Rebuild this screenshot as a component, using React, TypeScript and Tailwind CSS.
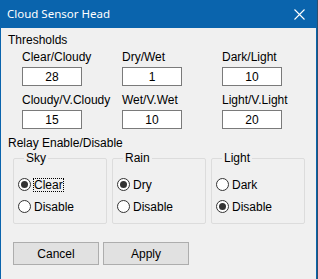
import React from 'react';

const FONT = "font-['Liberation_Sans',Arial,sans-serif]";

function Radio({ label, checked, focused }: { label: string; checked?: boolean; focused?: boolean }) {
  return (
    <div className="flex h-[13px] items-center">
      <span className="flex h-[13px] w-[13px] shrink-0 items-center justify-center rounded-full border border-[#333333] bg-white">
        {checked && <span className="h-[7px] w-[7px] rounded-full bg-[#333333]" />}
      </span>
      <span
        className={`ml-[2px] px-[1px] leading-[14px] ${
          focused ? 'outline outline-1 outline-dotted outline-[#000000] -outline-offset-1' : ''
        }`}
      >
        {label}
      </span>
    </div>
  );
}

function Group({ title, options, selected, focused }: { title: string; options: string[]; selected: number; focused?: boolean }) {
  return (
    <fieldset className="h-[73px] w-[94px] rounded-[2px] border border-[#dcdcdc] pl-[4px] pt-[13px]">
      <legend className="ml-[6px] px-[2px] leading-[14px]">{title}</legend>
      <div className="flex flex-col gap-[9px]">
        {options.map((o, i) => (
          <Radio key={o} label={o} checked={i === selected} focused={focused && i === selected} />
        ))}
      </div>
    </fieldset>
  );
}

function Field({ label, value }: { label: string; value: string }) {
  return (
    <div className="flex flex-col">
      <span className="leading-[14px]">{label}</span>
      <div className="mt-[3px] flex h-[19px] w-[60px] items-center justify-center border border-[#7a7a7a] bg-white leading-[14px]">
        {value}
      </div>
    </div>
  );
}

export default function App() {
  return (
    <div className={`flex h-[279px] w-[318px] bg-[#2a4f6e] text-[12px] text-black ${FONT}`}>
      <div className="flex w-[317px] flex-col border-x border-[#0a64ad] bg-[#f0f0f0]">
        {/* Title bar */}
        <div className="flex h-[28px] shrink-0 items-center justify-between bg-[#0a64ad] pl-[6px] pr-[10px] text-white">
          <span className="font-['Noto_Sans',sans-serif] text-[11.5px] leading-[16px]">Cloud Sensor Head</span>
          <svg width="11" height="11" viewBox="0 0 11 11" className="mr-[1px]">
            <path d="M0.5 0.5 L10.5 10.5 M10.5 0.5 L0.5 10.5" stroke="white" strokeWidth="1.1" />
          </svg>
        </div>

        {/* Body */}
        <div className="flex flex-col pl-[7px] pt-[5px]">
          <span className="leading-[14px]">Thresholds</span>
          <div className="ml-[14px] mt-[3px] grid w-[260px] grid-cols-[100px_100px_60px] gap-y-[7px]">
            <Field label="Clear/Cloudy" value="28" />
            <Field label="Dry/Wet" value="1" />
            <Field label="Dark/Light" value="10" />
            <Field label="Cloudy/V.Cloudy" value="15" />
            <Field label="Wet/V.Wet" value="10" />
            <Field label="Light/V.Light" value="20" />
          </div>

          <span className="mt-[7px] leading-[14px]">Relay Enable/Disable</span>
          <div className="ml-[5px] mt-[1px] flex gap-[5px]">
            <Group title="Sky" options={['Clear', 'Disable']} selected={0} focused />
            <Group title="Rain" options={['Dry', 'Disable']} selected={0} />
            <Group title="Light" options={['Dark', 'Disable']} selected={1} />
          </div>

          <div className="ml-[5px] mt-[18px] flex gap-[4px]">
            <button className="h-[23px] w-[86px] border border-[#adadad] bg-[#e1e1e1] leading-[14px]">Cancel</button>
            <button className="h-[23px] w-[86px] border border-[#adadad] bg-[#e1e1e1] leading-[14px]">Apply</button>
          </div>
        </div>
      </div>
    </div>
  );
}
